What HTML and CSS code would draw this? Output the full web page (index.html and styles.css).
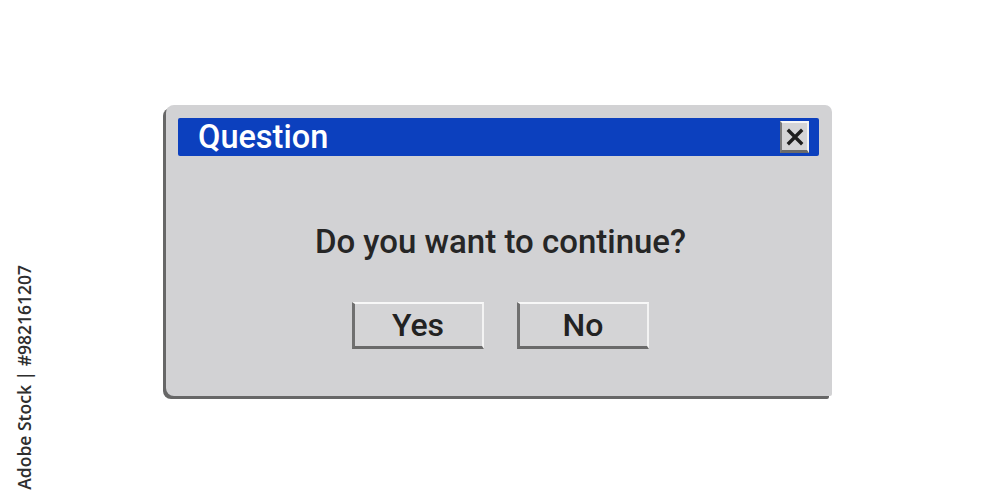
FILE: index.html
```html
<!DOCTYPE html>
<html lang="en">
<head>
    <meta charset="UTF-8">
    <meta name="viewport" content="width=device-width, initial-scale=1.0">
    <title>Question</title>
    <link rel="stylesheet" href="styles.css">
</head>
<body>
    <div class="page">
        <div class="dialog">
            <div class="title-bar">
                <span class="title">Question</span>
                <button class="close-btn" aria-label="Close">
                    <svg width="18" height="18" viewBox="0 0 18 18">
                        <path d="M3 3 L15 15 M15 3 L3 15" stroke="#1e1e1e" stroke-width="3.4" stroke-linecap="square"/>
                    </svg>
                </button>
            </div>

            <p class="message">Do you want to continue?</p>

            <div class="actions">
                <button class="btn">Yes</button>
                <button class="btn">No</button>
            </div>
        </div>

        <!-- stock id stamp on the left edge -->
        <div class="stamp">Adobe Stock | #982161207</div>
    </div>
</body>
</html>
```

FILE: styles.css
```css
body {
    margin: 0;
    padding: 0;
    background: #ffffff;
    font-family: Roboto, "Liberation Sans", sans-serif;
}
.page {
    position: relative;
    width: 1000px;
    height: 500px;
    overflow: hidden;
    padding-top: 105px;
    padding-left: 166px;
    box-sizing: border-box;
}
.dialog {
    width: 666px;
    height: 291px;
    box-sizing: border-box;
    padding: 13px 13px 0 12px;
    background: #d2d2d4;
    border-radius: 8px 7px 2px 8px;
    box-shadow: -3px 3px 0 #676767;
    display: flex;
    flex-direction: column;
}
.title-bar {
    height: 38px;
    background: #0c40be;
    border-radius: 2px;
    display: flex;
    align-items: center;
    justify-content: space-between;
    padding: 0 10px 0 20px;
}
.title {
    color: #ffffff;
    font-size: 32.5px;
    font-weight: 500;
    line-height: 38px;
}
.close-btn {
    width: 29px;
    height: 32px;
    padding: 0;
    margin: 0;
    background: #d4d4d6;
    border-style: solid;
    border-width: 2px 2px 3px 2px;
    border-color: #f6f6f6 #f2f2f2 #6a6a6a #7a7a7a;
    display: flex;
    align-items: center;
    justify-content: center;
}
.message {
    margin: 67px 0 0;
    padding-left: 4px;
    text-align: center;
    font-size: 33px;
    font-weight: 500;
    line-height: 38px;
    color: #262626;
}
.actions {
    margin-top: 41px;
    padding-left: 3px;
    display: flex;
    justify-content: center;
    gap: 33px;
}
.btn {
    width: 132px;
    height: 47px;
    margin: 0;
    padding: 0;
    background: #d4d4d6;
    border-style: solid;
    border-width: 2px 2px 3px 3px;
    border-color: #f8f8f8 #f3f3f3 #6a6a6a #707070;
    font-family: Roboto, "Liberation Sans", sans-serif;
    font-size: 32px;
    font-weight: 500;
    color: #222222;
}
.stamp {
    position: absolute;
    left: 12px;
    top: 265px;
    writing-mode: vertical-rl;
    transform: rotate(180deg);
    font-family: "Open Sans", "DejaVu Sans", sans-serif;
    font-size: 17.5px;
    font-weight: 600;
    color: #2e2e2e;
    white-space: nowrap;
}
```
